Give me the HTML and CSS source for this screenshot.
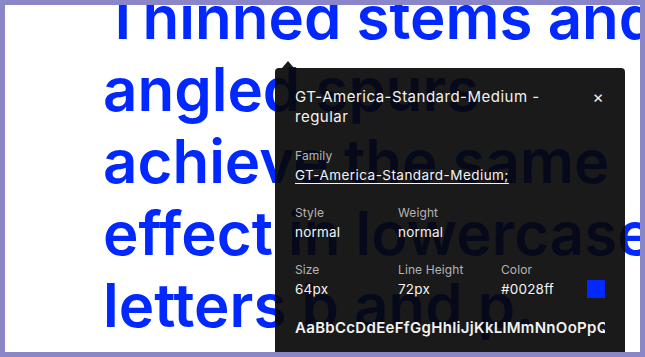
FILE: index.html
```html
<!DOCTYPE html>
<html lang="en">
<head>
<meta charset="utf-8">
<title>Font inspector</title>
<link rel="stylesheet" href="styles.css">
</head>
<body>
<div class="frame">
  <p class="specimen">Thinned stems and<br>angled spurs<br>achieve the same<br>effect in lowercase<br>letters b and p.</p>

  <div class="inspector">
    <span class="arrow"></span>
    <div class="head">
      <div class="title">GT-America-Standard-Medium - regular</div>
      <button class="close" aria-label="Close">×</button>
    </div>
    <div class="field">
      <div class="label">Family</div>
      <div class="value link">GT-America-Standard-Medium;</div>
    </div>
    <div class="row">
      <div class="field">
        <div class="label">Style</div>
        <div class="value">normal</div>
      </div>
      <div class="field">
        <div class="label">Weight</div>
        <div class="value">normal</div>
      </div>
    </div>
    <div class="row">
      <div class="field">
        <div class="label">Size</div>
        <div class="value">64px</div>
      </div>
      <div class="field">
        <div class="label">Line Height</div>
        <div class="value">72px</div>
      </div>
      <div class="field">
        <div class="label">Color</div>
        <div class="value">#0028ff</div>
      </div>
      <div class="swatch"></div>
    </div>
    <div class="alphabet">AaBbCcDdEeFfGgHhIiJjKkLlMmNnOoPpQqRrSsTtUuVvWwXxYyZz</div>
  </div>
</div>
</body>
</html>
```

FILE: styles.css
```css
* { box-sizing: border-box; }

html, body {
  margin: 0;
  padding: 0;
  background: #8a86c8;
}

.frame {
  position: relative;
  width: 645px;
  height: 357px;
  border: 5px solid #8a86c8;
  background: #ffffff;
  overflow: hidden;
}

.specimen {
  margin: -24px 0 0 0;
  padding-left: 98px;
  font-family: Inter, "Liberation Sans", sans-serif;
  font-weight: 600;
  font-size: 60px;
  line-height: 72px;
  letter-spacing: 0;
  color: #0028ff;
  white-space: nowrap;
}

.inspector {
  position: absolute;
  left: 270px;
  top: 63px;
  width: 350px;
  height: 290px;
  padding: 19px 20px 0 20px;
  background: rgba(6, 6, 6, 0.92);
  border-radius: 4px;
  font-family: Inter, "Liberation Sans", sans-serif;
  color: #f2f2f2;
}

.arrow {
  position: absolute;
  left: 7px;
  top: -7px;
  width: 0;
  height: 0;
  border-left: 6px solid transparent;
  border-right: 6px solid transparent;
  border-bottom: 7px solid rgba(6, 6, 6, 0.92);
}

.head {
  display: flex;
  justify-content: space-between;
  align-items: flex-start;
}

.title {
  width: 265px;
  font-size: 15px;
  line-height: 20px;
  font-weight: 400;
  letter-spacing: 0.5px;
}

.close {
  margin: 0;
  padding: 0;
  border: 0;
  background: none;
  color: #f2f2f2;
  font-family: Inter, "Liberation Sans", sans-serif;
  font-size: 17px;
  line-height: 20px;
  width: 20px;
  text-align: center;
  margin-right: -3px;
}

.field {
  margin-top: 21px;
}

.label {
  font-size: 12px;
  line-height: 16px;
  color: #b4b4b4;
  letter-spacing: 0.1px;
}

.value {
  margin-top: 2px;
  font-size: 13.5px;
  line-height: 18px;
  color: #f4f4f4;
  letter-spacing: 0.2px;
}

.link {
  text-decoration: underline;
  text-underline-offset: 3px;
  letter-spacing: 0.45px;
}

.row {
  display: grid;
  grid-template-columns: 103px 103px 1fr 18px;
  align-items: end;
}

.swatch {
  width: 18px;
  height: 18px;
  background: #0028ff;
}

.alphabet {
  margin-top: 20px;
  font-size: 15px;
  line-height: 20px;
  font-weight: 600;
  letter-spacing: 0.3px;
  white-space: nowrap;
  overflow: hidden;
  width: 310px;
}
```
